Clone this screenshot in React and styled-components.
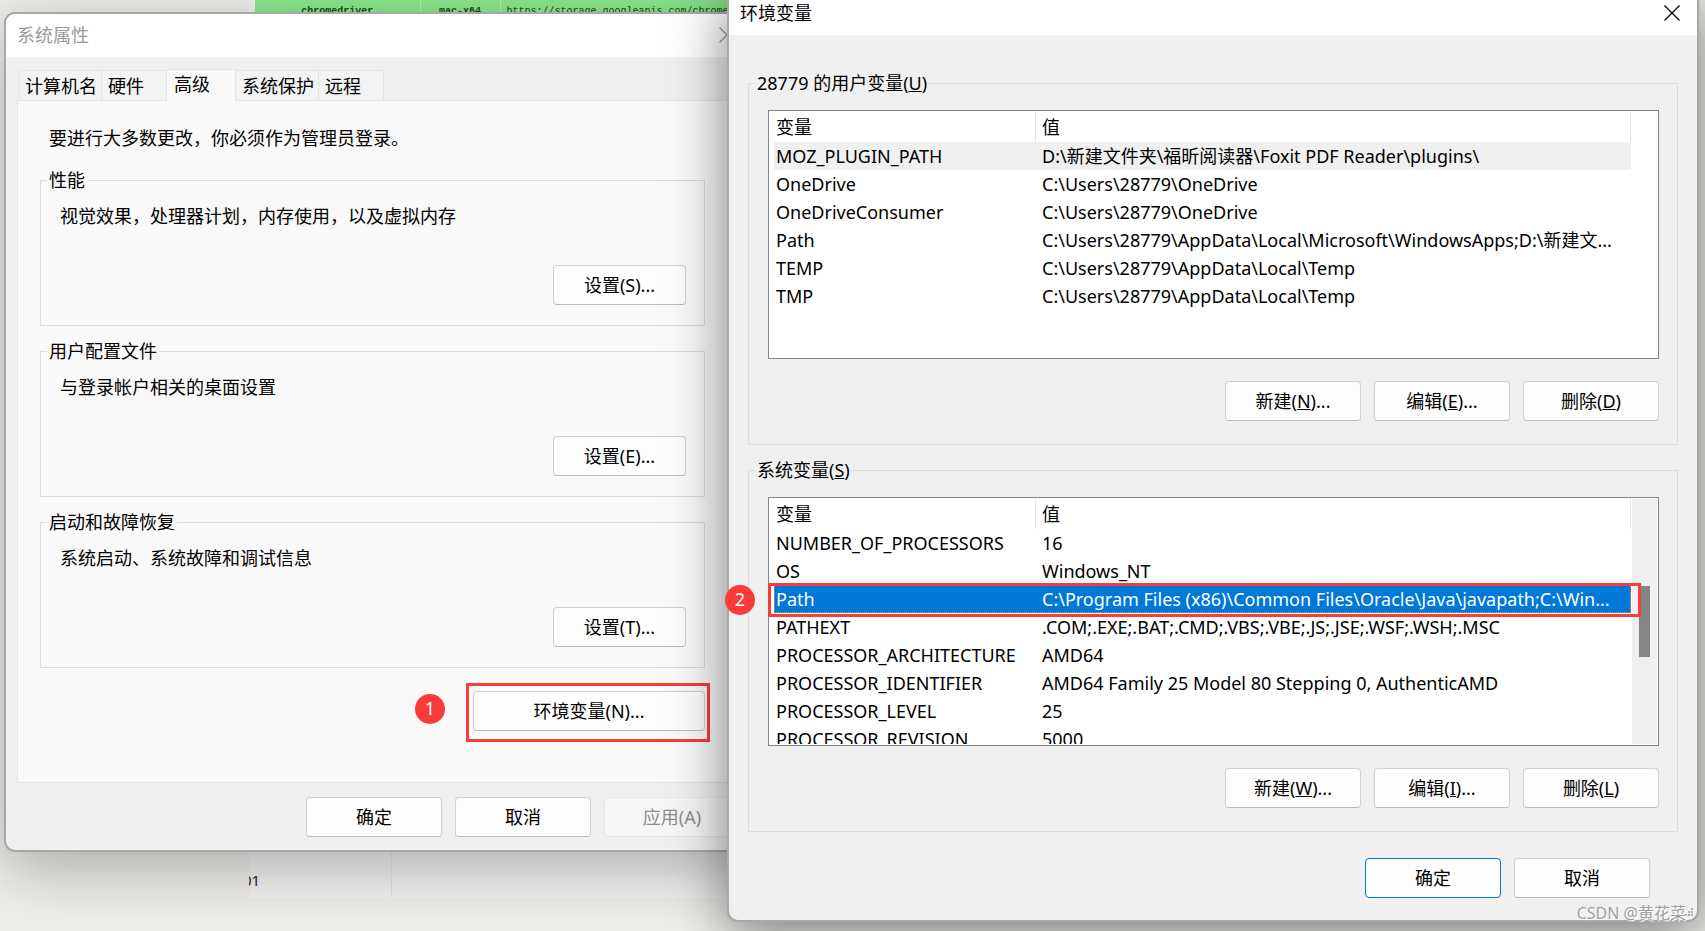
import React, { useState } from 'react';
import styled, { createGlobalStyle, css } from 'styled-components';

const GlobalStyle = createGlobalStyle`
    * {
        box-sizing: border-box;
    }

    body {
        margin: 0;
        overflow: hidden;
        font-family: 'Noto Sans', 'Noto Sans CJK SC', sans-serif;
        font-size: 18px;
        line-height: 24px;
        color: #000;
    }
`;

const Desktop = styled.div`
    position: relative;
    height: 100vh;
    overflow: hidden;
    background: #efeeea;
`;

/* page left open behind the dialogs */
const Backdrop = styled.div`
    display: flex;
    flex-direction: column;
    justify-content: space-between;
    height: 898px;
    margin: 0 200px 0 249px;
    background: #f3f3f4;
`;

const DriverTable = styled.table`
    width: 100%;
    margin-left: 6px;
    border-collapse: collapse;
    table-layout: fixed;
    background: #8bea8c;
    font-family: 'Liberation Mono', monospace;
    font-size: 10px;
    line-height: 24px;
    color: #1d4a1f;

    td {
        padding: 0 0 0 6px;
        border-right: 1px solid #b5f2b5;
        white-space: nowrap;
    }

    td:nth-child(1) {
        width: 165px;
        padding: 0;
        text-align: center;
        font-weight: bold;
    }

    td:nth-child(2) {
        width: 80px;
        padding: 0;
        text-align: center;
        font-weight: bold;
    }
`;

const BottomCells = styled.div`
    display: grid;
    grid-template-columns: 143px 1fr;
    height: 60px;
    overflow: hidden;

    span {
        padding-top: 30px;
        border-right: 1px solid #e6e6ea;
        font-size: 15px;
        line-height: 24px;
        text-indent: -6px;
        color: #2b2522;
        overflow: hidden;
    }
`;

const Window = styled.section`
    position: absolute;
    border: 2px solid #a8a8a6;
    border-radius: 11px;
    background: #f0f0f0;
    box-shadow: ${({ $active }) => ($active ? '0 12px 56px rgba(0, 0, 0, 0.5)' : '0 16px 64px rgba(0, 0, 0, 0.3)')};
`;

const PropertiesWindow = styled(Window)`
    top: 12px;
    left: 4px;
    width: 750px;
`;

const VariablesWindow = styled(Window)`
    top: -10px;
    left: 727px;
    right: 6px;
`;

const TitleBar = styled.header`
    display: flex;
    align-items: center;
    justify-content: space-between;
    height: 43px;
    padding: 0 17px 2px 11px;
    border-radius: 9px 9px 0 0;
    background: #fff;
    color: ${({ $active }) => ($active ? '#000' : '#999')};

    h2 {
        margin: 0;
        font-size: 18px;
        font-weight: normal;
    }
`;

const CloseButton = styled.button`
    display: flex;
    padding: 0;
    border: 0;
    background: none;
    color: inherit;
`;

const Tabs = styled.div`
    display: flex;
    align-items: flex-end;
    padding: 12px 13px 0;
`;

const Tab = styled.button`
    min-width: 65px;
    height: 30px;
    padding: 1px 4px 0 6px;
    border: 1px solid #e5e5e5;
    border-left-width: 0;
    border-bottom: 0;
    background: #f3f3f3;
    font: inherit;
    text-align: left;

    &:first-child {
        padding-left: 5px;
        border-left-width: 1px;
    }

    ${({ $active }) => $active && css`
        position: relative;
        z-index: 1;
        min-width: 69px;
        height: 32px;
        margin-bottom: -1px;
        padding-left: 7px;
        padding-bottom: 4px;
        background: #f9f9f9;
    `}
`;

const TabPage = styled.div`
    display: flex;
    flex-direction: column;
    gap: 13px;
    margin: 0 11px;
    padding: 25px 35px 51px 22px;
    border: 1px solid #e5e5e5;
    background: #f9f9f9;
`;

const Intro = styled.p`
    margin: 0 0 5px;
    padding-left: 9px;
`;

const Group = styled.fieldset`
    min-width: 0;
    margin: 0;
    padding: 0;
    border: 1px solid #dcdcdc;

    legend {
        margin-left: 6px;
        padding: 0 2px;
    }
`;

const SettingsBody = styled.div`
    display: flex;
    flex-direction: column;
    align-items: flex-end;
    gap: 37px;
    padding: 12px 18px 20px 19px;

    p {
        align-self: stretch;
        margin: 0;
    }
`;

const Button = styled.button`
    width: ${({ $width }) => $width || 136}px;
    height: 40px;
    padding: 0;
    border: 1px solid #d0d0d0;
    border-bottom-color: #bababa;
    border-radius: 4px;
    background: #fdfdfd;
    font: inherit;
    color: #000;

    ${({ $primary }) => $primary && css`
        border-color: #0078d4;
    `}

    &:disabled {
        border-color: #e6e6e6;
        background: #f6f6f6;
        color: #8c8c8c;
    }
`;

const ButtonRow = styled.div`
    display: flex;
    justify-content: flex-end;
    gap: 13px;
`;

const PropertiesFooter = styled(ButtonRow)`
    padding: 14px 12px 13px;
`;

const VariablesFooter = styled(ButtonRow)`
    padding: 13px 28px 0;
`;

const EnvRow = styled.div`
    position: relative;
    display: flex;
    justify-content: flex-end;
    margin-top: 10px;
`;

const RedFrame = styled.div`
    position: absolute;
    border: 3px solid #fb3a3a;
    pointer-events: none;
`;

const ButtonFrame = styled(RedFrame)`
    top: -8px;
    right: -5px;
    width: 244px;
    height: 59px;
`;

const RowFrame = styled(RedFrame)`
    top: 85px;
    left: -1px;
    right: 17px;
    height: 34px;
`;

const Badge = styled.span`
    position: absolute;
    width: 30px;
    height: 30px;
    border-radius: 50%;
    background: #fb3a3a;
    color: #fff;
    line-height: 28px;
    text-align: center;
`;

const ButtonBadge = styled(Badge)`
    top: 3px;
    right: 260px;
`;

const RowBadge = styled(Badge)`
    top: 87px;
    left: -44px;
`;

const VariablesBody = styled.div`
    display: flex;
    flex-direction: column;
    gap: 13px;
    padding: 36px 19px 22px;
`;

const GroupBody = styled.div`
    display: flex;
    flex-direction: column;
    gap: 22px;
    padding: 15px 18px 23px 19px;
`;

const ListBox = styled.div`
    position: relative;
    display: flex;
    height: 249px;
    padding: 1px 1px 1px 5px;
    border: 1px solid #82868f;
    background: #fff;
`;

const ListScroll = styled.div`
    flex: 1;
    min-width: 0;
    overflow: hidden;
`;

const ScrollTrack = styled.div`
    width: 25px;
    margin-left: 1px;
    padding: 87px 7px 0;
    background: ${({ $visible }) => ($visible ? '#f0f0f0' : 'transparent')};
`;

const ScrollThumb = styled.div`
    height: 71px;
    background: #858585;
`;

const VariableTable = styled.table`
    width: 100%;
    border-collapse: separate;
    border-spacing: 0;
    table-layout: fixed;

    th,
    td {
        height: 28px;
        padding: 0 0 0 6px;
        font-weight: normal;
        text-align: left;
        white-space: nowrap;
        overflow: hidden;
    }

    th {
        height: 30px;
        border-right: 1px solid #e5e5e5;
    }

    th:first-child,
    td:first-child {
        width: 262px;
        padding-left: 2px;
    }
`;

const VariableRow = styled.tr`
    background: ${({ $state }) => (({ marked: '#f0f0f0', selected: '#0078d7' })[$state] || 'transparent')};

    ${({ $state }) => $state === 'selected' && css`
        color: #fff;
        outline: 1px dotted #ff8728;
        outline-offset: -1px;
    `}
`;

const Watermark = styled.div`
    position: absolute;
    right: 19px;
    bottom: 6px;
    font-size: 16px;
    color: #a0a0a0;
    text-shadow: 1px 1px 1px #fff;
`;

const Grip = styled.svg`
    position: absolute;
    right: 3px;
    bottom: 3px;
`;

const TABS = ['计算机名', '硬件', '高级', '系统保护', '远程'];

const SETTINGS = [
    { title: '性能', text: '视觉效果，处理器计划，内存使用，以及虚拟内存', button: '设置(S)...' },
    { title: '用户配置文件', text: '与登录帐户相关的桌面设置', button: '设置(E)...' },
    { title: '启动和故障恢复', text: '系统启动、系统故障和调试信息', button: '设置(T)...' },
];

const USER_VARIABLES = [
    ['MOZ_PLUGIN_PATH', 'D:\\新建文件夹\\福昕阅读器\\Foxit PDF Reader\\plugins\\'],
    ['OneDrive', 'C:\\Users\\28779\\OneDrive'],
    ['OneDriveConsumer', 'C:\\Users\\28779\\OneDrive'],
    ['Path', 'C:\\Users\\28779\\AppData\\Local\\Microsoft\\WindowsApps;D:\\新建文...'],
    ['TEMP', 'C:\\Users\\28779\\AppData\\Local\\Temp'],
    ['TMP', 'C:\\Users\\28779\\AppData\\Local\\Temp'],
];

const SYSTEM_VARIABLES = [
    ['NUMBER_OF_PROCESSORS', '16'],
    ['OS', 'Windows_NT'],
    ['Path', 'C:\\Program Files (x86)\\Common Files\\Oracle\\Java\\javapath;C:\\Win...'],
    ['PATHEXT', '.COM;.EXE;.BAT;.CMD;.VBS;.VBE;.JS;.JSE;.WSF;.WSH;.MSC'],
    ['PROCESSOR_ARCHITECTURE', 'AMD64'],
    ['PROCESSOR_IDENTIFIER', 'AMD64 Family 25 Model 80 Stepping 0, AuthenticAMD'],
    ['PROCESSOR_LEVEL', '25'],
    ['PROCESSOR_REVISION', '5000'],
];

const Title = ({ text, active }) => (
    <TitleBar $active={active}>
        <h2>{text}</h2>
        <CloseButton type="button" aria-label="关闭">
            <svg width="16" height="16" viewBox="0 0 16 16" fill="none" stroke="currentColor" strokeWidth="1.3">
                <path d="M0.5 0.5L15.5 15.5M15.5 0.5L0.5 15.5" />
            </svg>
        </CloseButton>
    </TitleBar>
);

const VariableList = ({ rows, selected, state, scroll, onSelect, children }) => (
    <ListBox>
        <ListScroll>
            <VariableTable>
                <thead>
                    <tr>
                        <th scope="col">变量</th>
                        <th scope="col">值</th>
                    </tr>
                </thead>
                <tbody>
                    {rows.map(([name, value], i) => (
                        <VariableRow key={name} $state={i === selected ? state : undefined} onClick={() => onSelect(i)}>
                            <td>{name}</td>
                            <td>{value}</td>
                        </VariableRow>
                    ))}
                </tbody>
            </VariableTable>
        </ListScroll>
        <ScrollTrack $visible={scroll}>{scroll && <ScrollThumb />}</ScrollTrack>
        {children}
    </ListBox>
);

const SystemProperties = () => {
    const [tab, setTab] = useState('高级');

    return (
        <PropertiesWindow>
            <Title text="系统属性" />
            <Tabs role="tablist">
                {TABS.map((name) => (
                    <Tab
                        key={name}
                        type="button"
                        role="tab"
                        aria-selected={name === tab}
                        $active={name === tab}
                        onClick={() => setTab(name)}
                    >
                        {name}
                    </Tab>
                ))}
            </Tabs>
            <TabPage>
                <Intro>要进行大多数更改，你必须作为管理员登录。</Intro>
                {SETTINGS.map(({ title, text, button }) => (
                    <Group key={title}>
                        <legend>{title}</legend>
                        <SettingsBody>
                            <p>{text}</p>
                            <Button type="button" $width={133}>{button}</Button>
                        </SettingsBody>
                    </Group>
                ))}
                <EnvRow>
                    <Button type="button" $width={232}>环境变量(N)...</Button>
                    <ButtonFrame />
                    <ButtonBadge>1</ButtonBadge>
                </EnvRow>
            </TabPage>
            <PropertiesFooter>
                <Button type="button">确定</Button>
                <Button type="button">取消</Button>
                <Button type="button" disabled>应用(A)</Button>
            </PropertiesFooter>
        </PropertiesWindow>
    );
};

const EnvironmentVariables = () => {
    const [userRow, setUserRow] = useState(0);
    const [systemRow, setSystemRow] = useState(2);

    return (
        <VariablesWindow $active>
            <Title text="环境变量" active />
            <VariablesBody>
                <Group>
                    <legend>28779 的用户变量(<u>U</u>)</legend>
                    <GroupBody>
                        <VariableList rows={USER_VARIABLES} selected={userRow} state="marked" onSelect={setUserRow} />
                        <ButtonRow>
                            <Button type="button">新建(<u>N</u>)...</Button>
                            <Button type="button">编辑(<u>E</u>)...</Button>
                            <Button type="button">删除(<u>D</u>)</Button>
                        </ButtonRow>
                    </GroupBody>
                </Group>
                <Group>
                    <legend>系统变量(<u>S</u>)</legend>
                    <GroupBody>
                        <VariableList rows={SYSTEM_VARIABLES} selected={systemRow} state="selected" scroll onSelect={setSystemRow}>
                            <RowFrame />
                            <RowBadge>2</RowBadge>
                        </VariableList>
                        <ButtonRow>
                            <Button type="button">新建(<u>W</u>)...</Button>
                            <Button type="button">编辑(<u>I</u>)...</Button>
                            <Button type="button">删除(<u>L</u>)</Button>
                        </ButtonRow>
                    </GroupBody>
                </Group>
                <VariablesFooter>
                    <Button type="button" $primary>确定</Button>
                    <Button type="button">取消</Button>
                </VariablesFooter>
            </VariablesBody>
            <Grip width="9" height="9" viewBox="0 0 9 9" fill="#b4b4b4">
                <path d="M6 0h2v2h-2zM3 3h2v2h-2zM6 3h2v2h-2zM0 6h2v2h-2zM3 6h2v2h-2zM6 6h2v2h-2z" />
            </Grip>
        </VariablesWindow>
    );
};

const App = () => (
    <>
        <GlobalStyle />
        <Desktop>
            <Backdrop>
                <DriverTable>
                    <tbody>
                        <tr>
                            <td>chromedriver</td>
                            <td>mac-x64</td>
                            <td>https://storage.googleapis.com/chrome-</td>
                        </tr>
                    </tbody>
                </DriverTable>
                <BottomCells>
                    <span>01</span>
                </BottomCells>
            </Backdrop>
            <SystemProperties />
            <EnvironmentVariables />
            <Watermark>CSDN @黄花菜</Watermark>
        </Desktop>
    </>
);

export default App;
